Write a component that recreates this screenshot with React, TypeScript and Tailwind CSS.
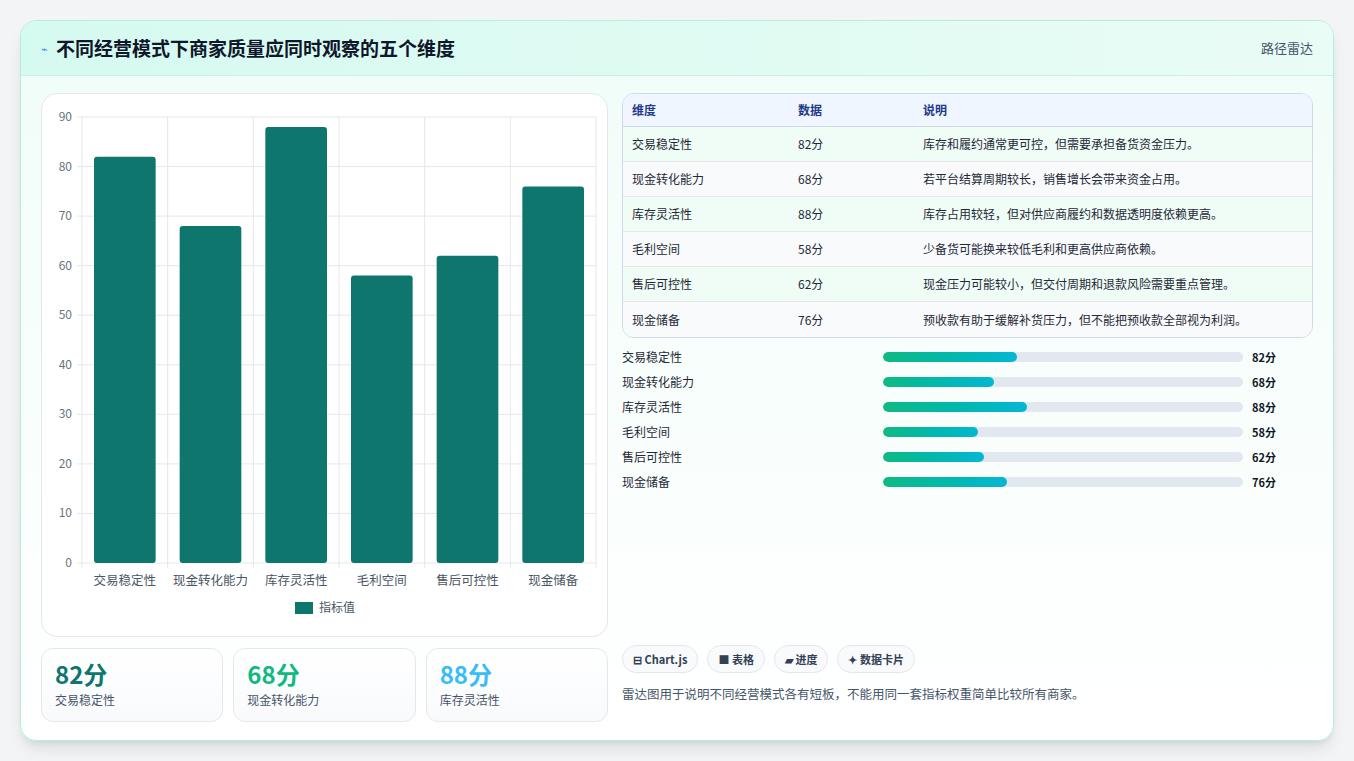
const data = [
  { n: "交易稳定性", v: 82, d: "库存和履约通常更可控，但需要承担备货资金压力。" },
  { n: "现金转化能力", v: 68, d: "若平台结算周期较长，销售增长会带来资金占用。" },
  { n: "库存灵活性", v: 88, d: "库存占用较轻，但对供应商履约和数据透明度依赖更高。" },
  { n: "毛利空间", v: 58, d: "少备货可能换来较低毛利和更高供应商依赖。" },
  { n: "售后可控性", v: 62, d: "现金压力可能较小，但交付周期和退款风险需要重点管理。" },
  { n: "现金储备", v: 76, d: "预收款有助于缓解补货压力，但不能把预收款全部视为利润。" },
];

function Chart() {
  const W = 566, H = 543;
  const x0 = 40, x1 = 554, y0 = 23, y1 = 469;
  const cw = (x1 - x0) / 6;
  const ys = (v: number) => y1 - ((y1 - y0) * v) / 90;
  return (
    <svg width={W} height={H} className="block">
      {[0, 10, 20, 30, 40, 50, 60, 70, 80, 90].map((t) => (
        <g key={t}>
          <line x1={x0 - 5} x2={x1} y1={ys(t)} y2={ys(t)} stroke="#e5e7eb" />
          <text x={x0 - 10} y={ys(t) + 4} textAnchor="end" fontSize="12" fill="#6b7280">{t}</text>
        </g>
      ))}
      {Array.from({ length: 7 }).map((_, i) => (
        <line key={i} x1={x0 + i * cw} x2={x0 + i * cw} y1={y0} y2={y1 + 5} stroke="#e5e7eb" />
      ))}
      {data.map((d, i) => (
        <g key={d.n}>
          <rect x={x0 + i * cw + 12} y={ys(d.v)} width={cw - 24} height={y1 - ys(d.v)} rx="3" fill="#0f766e" />
          <text x={x0 + i * cw + cw / 2} y={y1 + 22} textAnchor="middle" fontSize="12.5" fill="#4b5563">{d.n}</text>
        </g>
      ))}
      <rect x={253} y={508} width={18} height={12} fill="#0f766e" />
      <text x={277} y={518} fontSize="12" fill="#4b5563">指标值</text>
    </svg>
  );
}

export default function App() {
  return (
    <div className="w-[1354px] h-[761px] bg-[#f3f4f6] pt-5 pl-5" style={{ fontFamily: '"Noto Sans CJK SC", "Noto Sans", sans-serif' }}>
      <div className="w-[1314px] h-[721px] rounded-2xl border border-[#b7ece0] overflow-hidden bg-gradient-to-b from-[#f0fdf8] to-white shadow-lg">
        <div className="h-[55px] bg-gradient-to-r from-[#d5faf0] to-[#e9fcf5] border-b border-[#c8f0e4] flex items-center px-5">
          <span className="text-[#3b82f6] text-[11px] mr-2">⌁</span>
          <span className="text-[19px] font-bold text-[#0f172a]">不同经营模式下商家质量应同时观察的五个维度</span>
          <span className="ml-auto text-[13px] text-[#475569]">路径雷达</span>
        </div>
        <div className="flex px-5 pt-[17px] gap-[14px]">
          <div className="w-[567px] flex flex-col gap-[11px]">
            <div className="h-[544px] rounded-2xl border border-[#e5e7eb] bg-white overflow-hidden"><Chart /></div>
            <div className="flex gap-[10px]">
              {[["82分", "交易稳定性", "text-[#0f766e]"], ["68分", "现金转化能力", "text-[#10b981]"], ["88分", "库存灵活性", "text-[#38bdf8]"]].map(([a, b, c]) => (
                <div key={a} className="flex-1 h-[74px] rounded-xl border border-[#e5e7eb] bg-gradient-to-b from-white to-[#f8fafc] px-[13px] pt-[10px]">
                  <div className={`text-[24px] font-bold leading-[30px] ${c}`}>{a}</div>
                  <div className="text-[12px] text-[#475569] mt-[2px]">{b}</div>
                </div>
              ))}
            </div>
          </div>
          <div className="w-[693px] flex flex-col">
            <div className="rounded-xl border border-[#d1d9e6] overflow-hidden bg-white">
              <div className="h-[33px] bg-[#eff6ff] border-b border-[#d1d9e6] flex items-center px-[9px] text-[12px] font-bold text-[#1e3a8a]">
                <span className="w-[166px]">维度</span><span className="w-[125px]">数据</span><span>说明</span>
              </div>
              {data.map((d, i) => (
                <div key={d.n} className={`h-[35px] flex items-center px-[9px] text-[12px] text-[#1f2937] ${i < 5 ? "border-b border-[#e5e7eb]" : ""} ${i % 2 === 0 ? "bg-[#f0fdf6]" : "bg-[#f8fafc]"}`}>
                  <span className="w-[166px]">{d.n}</span><span className="w-[125px]">{d.v}分</span><span>{d.d}</span>
                </div>
              ))}
            </div>
            <div className="mt-[10px] flex flex-col gap-[7px]">
              {data.map((d) => (
                <div key={d.n} className="h-[18px] flex items-center text-[12px]">
                  <span className="w-[261px] text-[#1f2937]">{d.n}</span>
                  <div className="w-[360px] h-[10px] rounded-full bg-[#e2e8f0] overflow-hidden">
                    <div className="h-full rounded-full bg-gradient-to-r from-[#10b981] to-[#06b6d4]" style={{ width: `${d.v * 1.635}px` }} />
                  </div>
                  <span className="ml-[9px] font-bold text-[#111827] text-[11px]">{d.v}分</span>
                </div>
              ))}
            </div>
            <div className="mt-auto flex gap-[9px]">
              {["⊟ Chart.js", "■ 表格", "▰ 进度", "✦ 数据卡片"].map((t) => (
                <span key={t} className="h-[28px] px-[10px] rounded-full border border-[#e5e7eb] bg-[#f8fafc] text-[11px] font-bold text-[#334155] flex items-center">{t}</span>
              ))}
            </div>
            <div className="mt-[12px] mb-[18px] text-[12.5px] text-[#475569]">雷达图用于说明不同经营模式各有短板，不能用同一套指标权重简单比较所有商家。</div>
          </div>
        </div>
      </div>
    </div>
  );
}
